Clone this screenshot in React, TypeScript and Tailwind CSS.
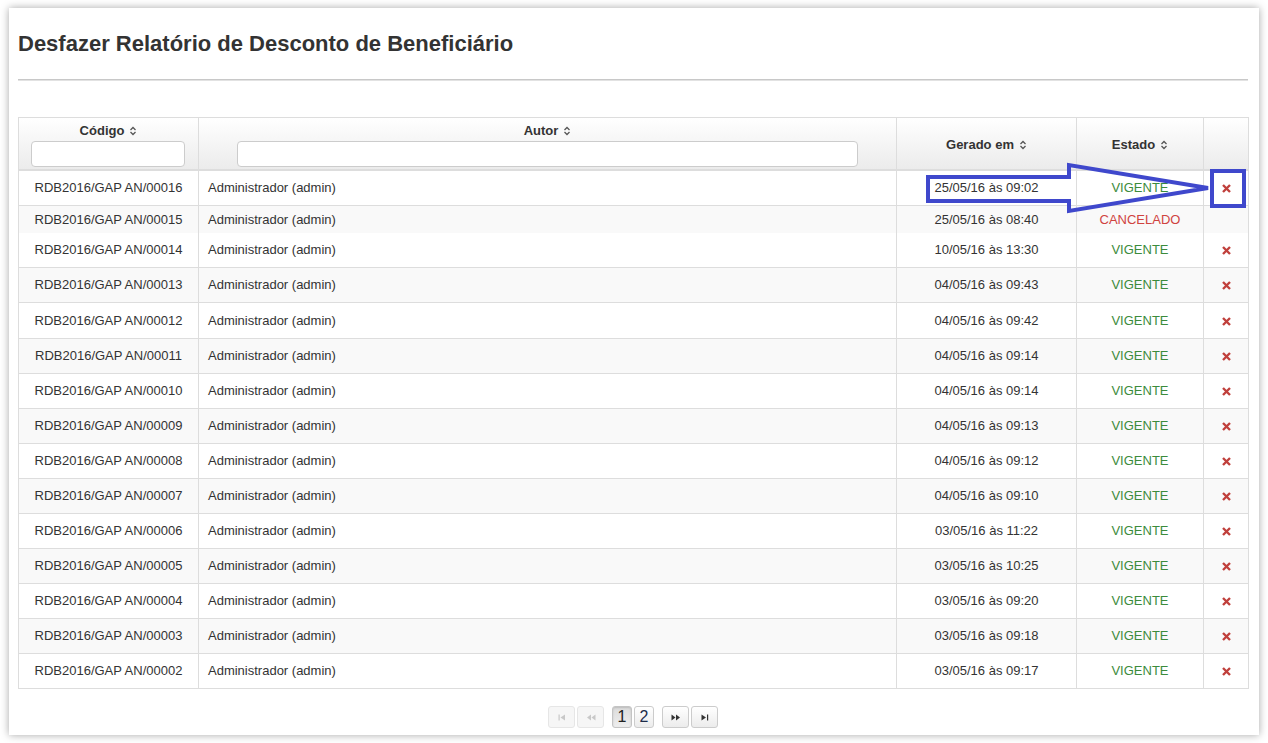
import React from "react";

type Row = { code: string; date: string; state: "VIGENTE" | "CANCELADO" };

const rows: Row[] = [
  { code: "00016", date: "25/05/16 às 09:02", state: "VIGENTE" },
  { code: "00015", date: "25/05/16 às 08:40", state: "CANCELADO" },
  { code: "00014", date: "10/05/16 às 13:30", state: "VIGENTE" },
  { code: "00013", date: "04/05/16 às 09:43", state: "VIGENTE" },
  { code: "00012", date: "04/05/16 às 09:42", state: "VIGENTE" },
  { code: "00011", date: "04/05/16 às 09:14", state: "VIGENTE" },
  { code: "00010", date: "04/05/16 às 09:14", state: "VIGENTE" },
  { code: "00009", date: "04/05/16 às 09:13", state: "VIGENTE" },
  { code: "00008", date: "04/05/16 às 09:12", state: "VIGENTE" },
  { code: "00007", date: "04/05/16 às 09:10", state: "VIGENTE" },
  { code: "00006", date: "03/05/16 às 11:22", state: "VIGENTE" },
  { code: "00005", date: "03/05/16 às 10:25", state: "VIGENTE" },
  { code: "00004", date: "03/05/16 às 09:20", state: "VIGENTE" },
  { code: "00003", date: "03/05/16 às 09:18", state: "VIGENTE" },
  { code: "00002", date: "03/05/16 às 09:17", state: "VIGENTE" },
];

function SortIcon() {
  return (
    <svg width="8" height="10" viewBox="0 0 8 10" className="inline-block ml-[5px] align-[-1px]">
      <path d="M1.5 4 L4 1.5 L6.5 4" fill="none" stroke="#555" strokeWidth="1.3" />
      <path d="M1.5 6 L4 8.5 L6.5 6" fill="none" stroke="#555" strokeWidth="1.3" />
    </svg>
  );
}

function XIcon() {
  return (
    <svg width="9" height="9" viewBox="0 0 9 9" className="inline-block">
      <path d="M1 1 L8 8 M8 1 L1 8" stroke="#c0403c" strokeWidth="2.4" strokeLinecap="butt" />
    </svg>
  );
}

function PagerIcon({ kind, faded }: { kind: "first" | "prev" | "next" | "last"; faded?: boolean }) {
  const c = faded ? "#c8c8c8" : "#333";
  return (
    <svg width="10" height="7" viewBox="0 0 10 7">
      {kind === "first" && (
        <>
          <rect x="1.5" y="0.5" width="1.2" height="6" fill={c} />
          <path d="M8 0.5 L3.5 3.5 L8 6.5 Z" fill={c} />
        </>
      )}
      {kind === "prev" && (
        <>
          <path d="M5 0.5 L1 3.5 L5 6.5 Z" fill={c} />
          <path d="M9.5 0.5 L5.5 3.5 L9.5 6.5 Z" fill={c} />
        </>
      )}
      {kind === "next" && (
        <>
          <path d="M0.5 0.5 L4.5 3.5 L0.5 6.5 Z" fill={c} />
          <path d="M5 0.5 L9 3.5 L5 6.5 Z" fill={c} />
        </>
      )}
      {kind === "last" && (
        <>
          <path d="M1.5 0.5 L6 3.5 L1.5 6.5 Z" fill={c} />
          <rect x="7" y="0.5" width="1.2" height="6" fill={c} />
        </>
      )}
    </svg>
  );
}

export default function App() {
  return (
    <div className="w-[1268px] h-[743px] bg-white px-[9px] py-[8px] font-['Liberation_Sans',Arial,sans-serif] text-[#333]">
      <div className="h-full bg-white shadow-[0_0_8px_rgba(0,0,0,0.35)] pl-[9px] pr-[11px] flex flex-col">
        <h1 className="mt-[24px] text-[22px] leading-[24px] font-bold text-[#333]">
          Desfazer Relatório de Desconto de Beneficiário
        </h1>
        <div className="mt-[23px] h-[2px] bg-[#c8c8c8] border-b border-[#e2e2e2]" />
        <div className="relative mt-[36px]">
          <table className="w-[1230px] table-fixed border-collapse border border-[#dddddd] text-[13px]">
            <colgroup>
              <col className="w-[180px]" />
              <col className="w-[698px]" />
              <col className="w-[180px]" />
              <col className="w-[127px]" />
              <col className="w-[45px]" />
            </colgroup>
            <thead>
              <tr className="h-[52px] bg-gradient-to-b from-[#ffffff] to-[#ebebeb]">
                <th className="border-r border-b-2 border-[#dddddd] align-top pt-[5px] font-bold">
                  <div className="leading-[16px]">
                    Código<SortIcon />
                  </div>
                  <div className="mt-[2px] ml-[12px] w-[154px] h-[26px] bg-white border border-[#cccccc] rounded-[4px]" />
                </th>
                <th className="border-r border-b-2 border-[#dddddd] align-top pt-[5px] font-bold">
                  <div className="leading-[16px]">
                    Autor<SortIcon />
                  </div>
                  <div className="mt-[2px] ml-[38px] w-[621px] h-[26px] bg-white border border-[#cccccc] rounded-[4px]" />
                </th>
                <th className="border-r border-b-2 border-[#dddddd] align-middle pt-[3px] font-bold">
                  Gerado em<SortIcon />
                </th>
                <th className="border-r border-b-2 border-[#dddddd] align-middle pt-[3px] font-bold">
                  Estado<SortIcon />
                </th>
                <th className="border-b-2 border-[#dddddd]" />
              </tr>
            </thead>
            <tbody>
              {rows.map((r, i) => {
                const cancel = r.state === "CANCELADO";
                const bg = i % 2 === 1 ? "bg-[#f9f9f9]" : "bg-white";
                const h = cancel ? "h-[27px]" : i === 0 || i === 4 ? "h-[36px]" : "h-[35px]";
                const bt = i === 2 ? "" : "border-t border-[#dddddd]";
                return (
                  <tr key={r.code} className={`${bg} ${h} ${bt}`}>
                    <td className="border-r border-[#dddddd] text-center align-middle">
                      RDB2016/GAP AN/{r.code}
                    </td>
                    <td className="border-r border-[#dddddd] pl-[9px] align-middle">Administrador (admin)</td>
                    <td className="border-r border-[#dddddd] text-center align-middle">{r.date}</td>
                    <td
                      className={`border-r border-[#dddddd] text-center align-middle ${
                        cancel ? "text-[#d0433f]" : "text-[#3c8b3c]"
                      }`}
                    >
                      {r.state}
                    </td>
                    <td className="text-center align-middle">{cancel ? null : <XIcon />}</td>
                  </tr>
                );
              })}
            </tbody>
          </table>
          <svg
            className="absolute left-0 top-0 pointer-events-none"
            width="1240"
            height="110"
            viewBox="0 0 1240 110"
          >
            <polygon
              points="910,60 1051,60 1051,48 1190,71 1051,94 1051,84 910,84"
              fill="none"
              stroke="#3f48cc"
              strokeWidth="4"
              strokeLinejoin="miter"
            />
            <rect x="1194" y="54" width="32" height="35" fill="none" stroke="#3f48cc" strokeWidth="4" />
          </svg>
        </div>
        <div className="mt-[17px] flex justify-center items-center">
          <div className="w-[27px] h-[22px] rounded-[3px] border border-[#e6e6e6] bg-[#f6f6f6] flex items-center justify-center">
            <PagerIcon kind="first" faded />
          </div>
          <div className="ml-[2px] w-[27px] h-[22px] rounded-[3px] border border-[#e6e6e6] bg-[#f6f6f6] flex items-center justify-center">
            <PagerIcon kind="prev" faded />
          </div>
          <div className="ml-[8px] w-[20px] h-[22px] rounded-[3px] border border-[#c4c4c4] bg-gradient-to-b from-[#dcdcdc] to-[#eeeeee] shadow-[inset_0_1px_2px_rgba(0,0,0,0.15)] flex items-center justify-center text-[16px] text-[#222]">
            1
          </div>
          <div className="ml-[2px] w-[20px] h-[22px] rounded-[3px] border border-[#cccccc] bg-gradient-to-b from-white to-[#ececec] flex items-center justify-center text-[16px] text-[#1d2b4a]">
            2
          </div>
          <div className="ml-[8px] w-[27px] h-[22px] rounded-[3px] border border-[#cccccc] bg-gradient-to-b from-white to-[#ececec] flex items-center justify-center">
            <PagerIcon kind="next" />
          </div>
          <div className="ml-[2px] w-[27px] h-[22px] rounded-[3px] border border-[#cccccc] bg-gradient-to-b from-white to-[#ececec] flex items-center justify-center">
            <PagerIcon kind="last" />
          </div>
        </div>
      </div>
    </div>
  );
}
